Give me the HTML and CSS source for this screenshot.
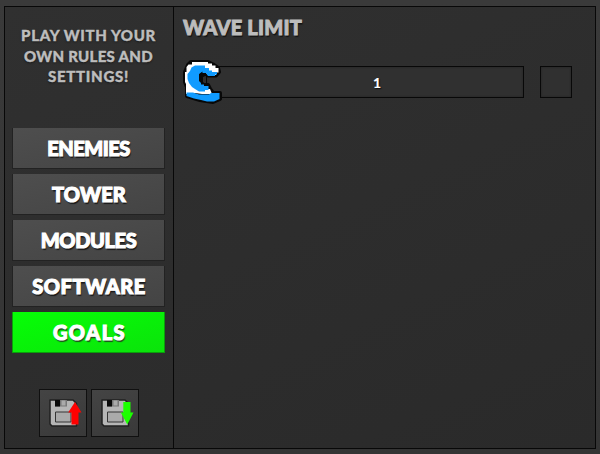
FILE: index.html
```html
<!DOCTYPE html>
<html lang="en">
<head>
<meta charset="utf-8">
<title>Custom Game</title>
<link rel="stylesheet" href="styles.css">
</head>
<body>
<main class="panel">
  <aside class="sidebar">
    <p class="intro"><span class="intro-a">PLAY WITH YOUR</span><br><span class="intro-b">OWN RULES AND</span><br><span class="intro-c">SETTINGS!</span></p>
    <nav class="menu">
      <button class="tab enemies">ENEMIES</button>
      <button class="tab tower">TOWER</button>
      <button class="tab modules">MODULES</button>
      <button class="tab software">SOFTWARE</button>
      <button class="tab goals active">GOALS</button>
    </nav>
    <div class="files">
      <button class="file" aria-label="Load">
        <svg class="disk" viewBox="0 0 46 46">
          <path class="shell" d="M10 10h23l3.500 3.500V36H12l-2-2z"/>
          <path class="shade" d="M15 10h12v6.500H15z"/><path class="slot" d="M15 10h5v6.500h-5z"/><path class="hole" d="M21.500 10.500h4v5h-4z"/>
          <path class="label" d="M15.500 22h15.500v10H15.500z"/>
          <path class="up" d="M35 12l6.500 10.500h-3v12h-7v-12h-3.300z"/>
        </svg>
      </button>
      <button class="file" aria-label="Save">
        <svg class="disk" viewBox="0 0 46 46">
          <path class="shell" d="M10 10h23l3.500 3.500V36H12l-2-2z"/>
          <path class="shade" d="M15 10h12v6.500H15z"/><path class="slot" d="M15 10h5v6.500h-5z"/><path class="hole" d="M21.500 10.500h4v5h-4z"/>
          <path class="label" d="M15.500 22h15.500v10H15.500z"/>
          <path class="down" d="M31.300 12h7.200v10.500h3L35.300 34.500 28.800 22.500h2.500z"/>
        </svg>
      </button>
    </div>
  </aside>
  <section class="content">
    <h1 class="title">WAVE LIMIT</h1>
    <div class="row">
      <div class="slider"><span class="value">1</span>
        <svg class="wave" viewBox="0 0 50 50">
          <path class="wave-edge" d="M13 6H30L35 8.500 40 12 41 16 38 19.500H30L27.500 17.500 23 20V26L25 29H30L32 33 35 37H42V43L35 46 22 44 9 40V31L7 26V16L10 9z"/>
          <path class="foam" d="M14 6H30V7.500H34V9.500H37.500V12H40.500V16.500H38V19H30L26 15H22L20 20V28L24 33H32L34 38H24L17 37 8 38V28L7 26V16H8.500V11L10.500 8.500H14z"/>
          <path class="water" d="M17 9.500H27V12H31V14.500H34V16H39V18.500H37V20H30L28 17H24.500V15.500L21 18V25L23 27V28.500H26V30H30.500V34H27V35.500H21L17 33 14 31 11 27 9.500 23V18L12 15 13.500 11.500z"/>
          <path class="water" d="M8.500 36.500H15L21 38.500H31L33 37H41.500V43L36 45.500H29L23 44 16 42.500 8.500 40z"/>
        </svg>
      </div>
      <button class="check" aria-label="Enable"></button>
    </div>
  </section>
</main>
</body>
</html>
```
FILE: styles.css
```css
* { box-sizing: border-box; }
body {
  margin: 0;
  padding: 6px 4px 5px;
  height: 454px;
  overflow: hidden;
  background: linear-gradient(#3a3a3a, #343434);
  font-family: Lato, "Liberation Sans", sans-serif;
  font-weight: 900;
}
button { font: inherit; padding: 0; margin: 0; }
.panel {
  display: flex;
  height: 443px;
  border: 1px solid #080808;
  background: linear-gradient(155deg, #303030, #2a2a2a);
}
.sidebar {
  width: 169px;
  border-right: 1px solid #080808;
  padding: 18px 8px 0 7px;
  display: flex;
  flex-direction: column;
}
.intro {
  margin: 0;
  height: 103px;
  text-align: center;
  white-space: nowrap;
  color: #bdbdbd;
  font-size: 15px;
  line-height: 20.5px;
  -webkit-text-stroke: 0.4px #bdbdbd;
  text-shadow: 0 1px 2px #151515;
}
.intro-a { letter-spacing: 0.65px; }
.intro-b { letter-spacing: 0.3px; }
.intro-c { letter-spacing: 0.7px; }
.menu { display: flex; flex-direction: column; gap: 5px; }
.tab {
  height: 41px;
  border: 1px solid #222;
  border-width: 0 1px 1px;
  background: linear-gradient(165deg, #4e4e4e, #444);
  color: #fff;
  font-size: 20px;
  line-height: 41px;
  -webkit-text-stroke: 1.1px #fff;
  text-shadow: 1px 2px 1px #181818;
  white-space: nowrap;
}
.enemies { letter-spacing: -0.5px; }
.tower { letter-spacing: 0.15px; padding-left: 1px; }
.modules { letter-spacing: -0.4px; }
.software { letter-spacing: 0.5px; padding-left: 1px; }
.goals { letter-spacing: 1.5px; padding-left: 2px; }
.active { background: linear-gradient(165deg, #06ff06, #0be30b); border-color: #0b9e0b; text-shadow: 1px 2px 1px #1e4b1e; }
.files { display: flex; gap: 4px; margin: 36px 0 0 27px; }
.file {
  width: 48px;
  height: 48px;
  border: 1px solid #101010;
  background: linear-gradient(155deg, #444, #393939);
}
.disk { display: block; width: 46px; height: 46px; }
.shell { fill: #b6b6b6; stroke: #202020; stroke-width: 1.5; stroke-linejoin: round; }
.shade { fill: #777; }
.slot { fill: #090909; }
.hole { fill: #aaa; }
.label { fill: #aaa; stroke: #353535; }
.up { fill: #f00; }
.down { fill: #1cff00; }
.content { flex: 1; padding: 8px 23px 0 9px; }
.title {
  margin: 0;
  height: 51px;
  font-size: 20px;
  line-height: 25px;
  font-weight: 900;
  letter-spacing: 0.2px;
  color: #bdbdbd;
  -webkit-text-stroke: 0.9px #bdbdbd;
  text-shadow: 1px 2px 1px #131313;
  white-space: nowrap;
}
.row { display: flex; gap: 16px; margin-left: 23px; }
.slider, .check {
  height: 32px;
  border: 1px solid #080808;
  background: #303030;
  box-shadow: inset 0 0 2px #202020;
}
.slider { position: relative; width: 318px; text-align: center; }
.check { width: 32px; }
.value { color: #fff; font-size: 14px; line-height: 32px; margin-left: 24px; text-shadow: 1px 1px 1px #111; }
.wave { position: absolute; left: -29px; top: -11px; width: 50px; height: 50px; }
.wave-edge { fill: #080808; stroke: #080808; stroke-width: 4; stroke-linejoin: round; }
.foam { fill: #fff; }
.water { fill: #109bff; }
```
